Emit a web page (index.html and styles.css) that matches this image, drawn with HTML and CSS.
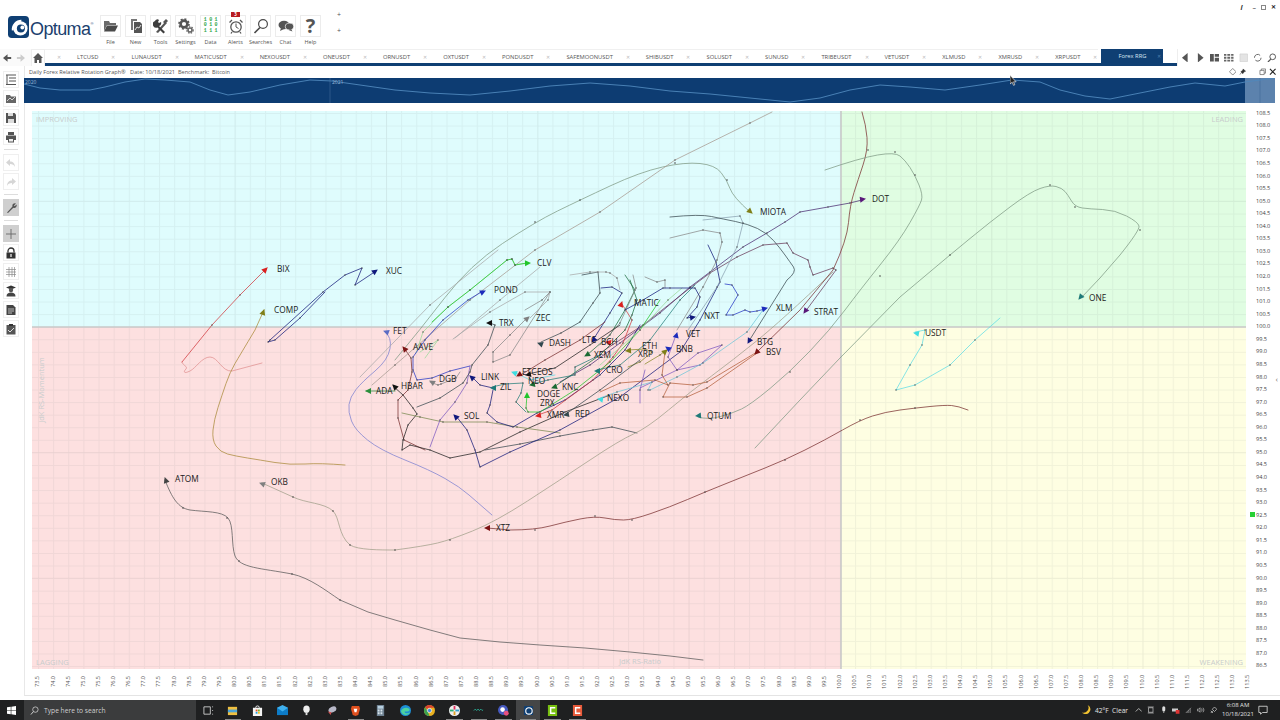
FILE: index.html
```html
<!DOCTYPE html>
<html lang="en">
<head>
<meta charset="utf-8">
<title>Optuma</title>
<link rel="stylesheet" href="styles.css">
</head>
<body>
<div class="app">
  <header class="topbar">
    <div class="logo">
      <svg class="logo-mark" viewBox="0 0 22 23"><rect x="0" y="0" width="22" height="23" rx="4" fill="#0f3f73"/><circle cx="13" cy="13" r="7.5" fill="#fff"/><path d="M5 15a9 9 0 0 1 9-10" fill="none" stroke="#fff" stroke-width="2"/><circle cx="13.5" cy="13" r="4.2" fill="#0f3f73"/><circle cx="15" cy="12" r="2" fill="#fff"/></svg>
      <span class="logo-text">Optuma</span>
    </div>
    <nav class="tools">
      <div class="tool"><span class="tool-box"><svg viewBox="0 0 16 16"><path d="M1 3h5l1 2h6v2H4L1 13z" fill="#6a6a6a"/><path d="M4 7.500h11l-3 6H1z" fill="#4a4a4a"/></svg></span><span class="tool-label">File</span></div>
      <div class="tool"><span class="tool-box"><svg viewBox="0 0 16 16"><path d="M3 1h6v2H5v9H3z" fill="#777"/><path d="M6 4h6l2 2v9H6z" fill="#555"/><path d="M7 12l2-3 2 1 2-3" fill="none" stroke="#fff" stroke-width=".8"/></svg></span><span class="tool-label">New</span></div>
      <div class="tool"><span class="tool-box"><svg viewBox="0 0 16 16"><path d="M3 14L12 4l2 1-9 10z" fill="#555"/><path d="M13 1l2 2-3 3-2-2z" fill="#555"/><path d="M2 3a2.500 2.500 0 0 1 4-1L5 4l1 1 2-1a3 3 0 0 1-2 4l6 6-1.500 1.500-6-6A3 3 0 0 1 2 3z" fill="#3e3e3e"/></svg></span><span class="tool-label">Tools</span></div>
      <div class="tool"><span class="tool-box"><svg viewBox="0 0 16 16"><circle cx="6" cy="6" r="3.400" fill="none" stroke="#555" stroke-width="2.600"/><circle cx="6" cy="6" r="5" fill="none" stroke="#555" stroke-width="1.600" stroke-dasharray="2 1.900"/><circle cx="12" cy="12" r="2" fill="none" stroke="#666" stroke-width="1.600"/><circle cx="12" cy="12" r="3.200" fill="none" stroke="#666" stroke-width="1.200" stroke-dasharray="1.500 1.200"/></svg></span><span class="tool-label">Settings</span></div>
      <div class="tool"><span class="tool-box"><span class="bits">1 0 1<br>0 1 0<br>1 1 1</span></span><span class="tool-label">Data</span></div>
      <div class="tool"><span class="tool-box"><svg viewBox="0 0 16 16"><circle cx="8" cy="9" r="5.200" fill="#fff" stroke="#555" stroke-width="1.300"/><path d="M8 5.500V9l2.500 1.500" fill="none" stroke="#555"/><path d="M1.500 4.500L4 2M14.500 4.500L12 2M4 14l-1 1.500M12 14l1 1.500" stroke="#555" stroke-width="1.300"/></svg></span><span class="tool-label">Alerts</span><span class="badge">3</span></div>
      <div class="tool"><span class="tool-box"><svg viewBox="0 0 16 16"><circle cx="10" cy="6" r="4.400" fill="none" stroke="#4a4a4a" stroke-width="1.200"/><path d="M7 9.500L1.500 15" stroke="#4a4a4a" stroke-width="1.600"/></svg></span><span class="tool-label">Searches</span></div>
      <div class="tool"><span class="tool-box"><svg viewBox="0 0 16 16"><ellipse cx="6" cy="7" rx="5.500" ry="4.200" fill="#555"/><path d="M3 10l-1 3 4-2z" fill="#555"/><ellipse cx="11.500" cy="8.500" rx="4.200" ry="3.400" fill="#555" stroke="#fff" stroke-width=".7"/><path d="M13 11l1.500 2.500-4-1.500z" fill="#555"/></svg></span><span class="tool-label">Chat</span></div>
      <div class="tool"><span class="tool-box help-mark">?</span><span class="tool-label">Help</span></div>
      <div class="plus-stack"><span>+</span><span>+</span></div>
    </nav>
    <div class="winctl"><span class="win-i">i</span><span>–</span><span class="win-sq"></span><span class="win-x">✕</span></div>
  </header>

  <div class="tabrow">
    <div class="tabnav">
      <svg class="nav-arrow" viewBox="0 0 10 10"><path d="M9 4H5V1L0 5l5 4V6h4z" fill="#555"/></svg>
      <svg class="nav-arrow" viewBox="0 0 10 10"><path d="M1 4h4V1l5 4-5 4V6H1z" fill="#ccc"/></svg>
      <span class="homebox"><svg class="home" viewBox="0 0 10 10"><path d="M5 0L0 5h1.500v5h2.500V7h2v3h2.500V5H10z" fill="#555"/></svg></span>
    </div>
    <div class="tabs">
      <span class="tab stub"><span class="tab-x">✕</span></span>
      <span class="tab">LTCUSD<span class="tab-x">✕</span></span>
      <span class="tab">LUNAUSDT<span class="tab-x">✕</span></span>
      <span class="tab">MATICUSDT<span class="tab-x">✕</span></span>
      <span class="tab">NEXOUSDT<span class="tab-x">✕</span></span>
      <span class="tab">ONEUSDT<span class="tab-x">✕</span></span>
      <span class="tab">ORNUSDT<span class="tab-x">✕</span></span>
      <span class="tab">OXTUSDT<span class="tab-x">✕</span></span>
      <span class="tab">PONDUSDT<span class="tab-x">✕</span></span>
      <span class="tab">SAFEMOONUSDT<span class="tab-x">✕</span></span>
      <span class="tab">SHIBUSDT<span class="tab-x">✕</span></span>
      <span class="tab">SOLUSDT<span class="tab-x">✕</span></span>
      <span class="tab">SUNUSD<span class="tab-x">✕</span></span>
      <span class="tab">TRIBEUSDT<span class="tab-x">✕</span></span>
      <span class="tab">VETUSDT<span class="tab-x">✕</span></span>
      <span class="tab">XLMUSD<span class="tab-x">✕</span></span>
      <span class="tab">XMRUSD<span class="tab-x">✕</span></span>
      <span class="tab">XRPUSDT<span class="tab-x">✕</span></span>
      <span class="tab active">Forex RRG<span class="tab-x">✕</span></span>
    </div>
    <div class="tabctl">
      <svg viewBox="0 0 10 10"><path d="M7 0v10L1 5z" fill="#555"/></svg>
      <svg viewBox="0 0 10 10"><path d="M3 0v10l6-5z" fill="#555"/></svg>
      <svg viewBox="0 0 10 10"><path d="M0 1h4v8H0zM5 1h5v3H5zM5 5h5v4H5z" fill="#555"/></svg>
      <svg viewBox="0 0 10 10"><path d="M0 1h2.500v2H0zM3.500 1h3v2h-3zM7.500 1H10v2H7.500zM0 4h2.500v2H0zM3.500 4h3v2h-3zM7.500 4H10v2H7.500zM0 7h2.500v2H0zM3.500 7h3v2h-3zM7.500 7H10v2H7.500z" fill="#666"/></svg>
      <svg viewBox="0 0 10 10"><path d="M1 1h8v8H1z" fill="#e4e4e4" stroke="#ccc" stroke-width=".6"/></svg>
      <svg viewBox="0 0 10 10"><path d="M1.500 5a3.500 3.500 0 0 1 6-2.500M8.500 5a3.500 3.500 0 0 1-6 2.500" fill="none" stroke="#666"/></svg>
      <svg viewBox="0 0 10 10"><circle cx="6" cy="4" r="3" fill="none" stroke="#555"/><path d="M4 6.500L1 9.500" stroke="#555" stroke-width="1.300"/></svg>
    </div>
  </div>

  <div class="main">
    <aside class="sidebar">
      <span class="side"><svg viewBox="0 0 12 12"><path d="M1 1h10M4 4h7M4 7h7M1 10.500h10M2 1v9.500" fill="none" stroke="#555"/></svg></span>
      <span class="side"><svg viewBox="0 0 12 12"><path d="M1 2h4l1 1.500h5V10H1z" fill="#666"/><path d="M2 8l3-3 2 2 3-3" fill="none" stroke="#eee" stroke-width=".8"/></svg></span>
      <span class="side"><svg viewBox="0 0 12 12"><path d="M1 1h8.500L11 2.500V11H1z" fill="#555"/><path d="M3 1h5v3H3zM3 7h6v4H3z" fill="#ddd"/></svg></span>
      <span class="side"><svg viewBox="0 0 12 12"><path d="M3 1h6v3H3zM1 4.500h10V9H9v2.500H3V9H1z" fill="#555"/><path d="M4 8h4v2.500H4z" fill="#eee"/></svg></span>
      <span class="side-sep"></span>
      <span class="side"><svg viewBox="0 0 12 12"><path d="M5 2L1 5.500 5 9V7c2.500 0 4 .8 5 3 0-3.500-2-5.500-5-5.500z" fill="#d6d6d6"/></svg></span>
      <span class="side"><svg viewBox="0 0 12 12"><path d="M7 2l4 3.500L7 9V7c-2.500 0-4 .8-5 3 0-3.500 2-5.500 5-5.500z" fill="#d6d6d6"/></svg></span>
      <span class="side-sep"></span>
      <span class="side on"><svg viewBox="0 0 12 12"><path d="M2 10.500L7.500 4.500a2.500 2.500 0 0 1 3.500-3L9 3.500l.7.8 1.800-1.800a2.500 2.500 0 0 1-3.200 3.300L3 11z" fill="#555"/></svg></span>
      <span class="side-sep"></span>
      <span class="side on"><svg viewBox="0 0 12 12"><path d="M6 1v10M1 6h10" stroke="#666" stroke-width=".9"/></svg></span>
      <span class="side"><svg viewBox="0 0 12 12"><path d="M3 5.500V4a3 3 0 0 1 6 0v1.500" fill="none" stroke="#333" stroke-width="1.300"/><rect x="1.500" y="5.500" width="9" height="6" fill="#333"/><rect x="5.300" y="7" width="1.400" height="3" fill="#ddd"/></svg></span>
      <span class="side"><svg viewBox="0 0 12 12"><path d="M4 1v10M7 1v10M9.500 1v10M1 3.500h10M1 6h10M1 8.500h10" stroke="#888" stroke-width=".7"/></svg></span>
      <span class="side"><svg viewBox="0 0 12 12"><path d="M6 .5l5 2-5 2-5-2z" fill="#333"/><circle cx="6" cy="5" r="2.200" fill="#555"/><path d="M1.500 11.500c0-3 2-4 4.500-4s4.500 1 4.500 4z" fill="#444"/></svg></span>
      <span class="side"><svg viewBox="0 0 12 12"><path d="M1.500 1H8l2.500 2.500V11h-9z" fill="#444"/><path d="M3 5h6M3 7h6M3 9h4" stroke="#eee" stroke-width=".7"/></svg></span>
      <span class="side"><svg viewBox="0 0 12 12"><path d="M1.500 2h9v9.500h-9z" fill="#555"/><rect x="4" y="1" width="4" height="2" fill="#333"/><path d="M3 7l2 2 4-4" fill="none" stroke="#ddd"/></svg></span>
    </aside>

    <section class="workspace">
      <div class="chart-title">
        <span class="chart-title-text">Daily Forex Relative Rotation Graph®&nbsp;&nbsp;&nbsp;Date: 10/18/2021&nbsp;&nbsp;Benchmark:&nbsp;&nbsp;Bitcoin</span>
        <span class="chart-ctl">
          <svg viewBox="0 0 8 8"><path d="M4 .5L7.500 4 4 7.500.5 4z" fill="none" stroke="#555" stroke-width=".7"/></svg>
          <svg viewBox="0 0 8 8"><path d="M4.500 1L7 3.500 5.500 4 4 6 2 4l2-1.500zM2.500 5L1 7" fill="#333" stroke="#333" stroke-width=".6"/></svg>
          <svg viewBox="0 0 8 8"></svg>
          <svg viewBox="0 0 8 8"><path d="M1 2.500h4.500V7H1zM2.500 2.500V1H7v4.500H5.500" fill="none" stroke="#555" stroke-width=".7"/></svg>
          <svg viewBox="0 0 8 8"><path d="M1 1l6 6M7 1L1 7" stroke="#222" stroke-width="1.200"/></svg>
        </span>
      </div>
      <div class="timeline">
        <svg class="timeline-svg" viewBox="24 78 1251 25" preserveAspectRatio="none">
          <rect class="tl-bg" x="24" y="78" width="1221" height="25"/>
          <rect class="tl-win" x="1245" y="78" width="30" height="25"/>
          <path class="tl-tick" d="M330 78v25M1260 78v25"/>
          <polyline class="tl-line" points="24,84 40,88 60,90 90,90 105,87 125,82 145,79 165,80 190,82 210,90 228,95 250,92 280,85 310,80 332,81 360,85 395,90 430,93 470,95 510,91 550,86 590,83 630,86 670,91 710,94 750,98 790,102 820,98 850,90 880,85 910,87 945,90 980,85 1012,80 1040,82 1060,90 1085,96 1110,99 1140,93 1170,87 1195,83 1225,86 1245,82 1275,78"/>
          <text class="tl-text" x="25" y="84">2020</text>
          <text class="tl-text" x="332" y="84">2021</text>
        </svg>
      </div>

      <div class="chart-row">
        <svg class="chart" viewBox="32 111 1214 558" role="img" aria-label="Relative rotation graph">
          <defs>
            <pattern id="grid" x="38" y="113" width="15.13" height="12.57" patternUnits="userSpaceOnUse">
              <path class="grid-line" d="M.5 0V12.570M0 .5H15.130"/>
            </pattern>
            <marker id="dot" markerWidth="3" markerHeight="3" refX="1.500" refY="1.500" markerUnits="userSpaceOnUse"><circle class="node" cx="1.500" cy="1.500" r=".65"/></marker>
            <path id="h" d="M1 0L-5 -3 -5 3Z"/>
          </defs>
          <rect class="q-improving" x="32" y="111" width="809" height="216"/>
          <rect class="q-leading" x="841" y="111" width="405" height="216"/>
          <rect class="q-lagging" x="32" y="327" width="809" height="342"/>
          <rect class="q-weakening" x="841" y="327" width="405" height="342"/>
          <rect class="grid-fill" x="32" y="111" width="1214" height="558"/>
          <path class="grid-major" d="M235 111V669M386.500 111V669M538 111V669M689 111V669M992 111V669M1143 111V669M32 201H1246M32 452.500H1246M32 578H1246"/>
          <path class="axis-cross" d="M841 111V669M32 327H1246"/>

          <text class="q-text" x="36" y="122">IMPROVING</text>
          <text class="q-text q-end" x="1243" y="122">LEADING</text>
          <text class="q-text" x="36" y="665">LAGGING</text>
          <text class="q-text q-end" x="1243" y="665">WEAKENING</text>
          <text class="q-text q-mid" x="640" y="664">JdK RS-Ratio</text>
          <text class="q-text q-mid" transform="translate(44 390) rotate(-90)">JdK RS-Momentum</text>

          <g class="trails">
            <path class="t lt-red sm" d="M182 362C183 366 188 366 186 369C183 372 184 374 190 371C196 368 202 357 210 357C218 357 222 372 232 371L262 363"/>
            <polyline class="t red" points="182,362 212,325 240,295 267,268"/>
            <path class="t orange sm" d="M264 310L255 330Q240 355 235 363.500Q230 372 226 383.500Q222 395 218 407.500Q214 420 213 430Q212 440 216 446Q220 452 227.500 454Q235 456 247.500 458Q260 460 275 462.500Q290 465 305 464Q320 463 345 465"/>
            <polyline class="t navy" points="376,271 355,285 362,268 345,275 323,292 270,340 268,342 275,340 300,318 325,292"/>
            <path class="t slate sm" d="M385 332Q392 337 390 348.500Q388 360 375 371Q362 382 356 389.500Q350 397 349 404.500Q348 412 351.500 421Q355 430 367.500 440Q380 450 405 460Q430 470 445 478.500Q460 487 469 495L492 515"/>
            <polyline class="t dred" points="404,348 411,358 412,372 408,390 398,400 398,418 404,440 425,450"/>
            <polyline class="t green" points="366,391 395,391"/>
            <polyline class="t black" points="393,386 403,395 413,408 417,414 408,425 403,440 402,450 410,445 430,450 450,458 480,452 520,432 565,412 610,395"/>
            <polyline class="t gray" points="430,382 438,385 441,384 456,378 460,372"/>
            <polyline class="t olive-gray" points="402,413 420,417 443,422 487,422 517,427 560,433"/>
            <polyline class="t dark" points="485,450 520,444 560,436 593,430 612,427 637,433"/>

            <path class="t ash sm" d="M165 480C172 498 178 508 190 510C205 512 222 511 228 518C234 525 231 545 235 556C240 568 260 568 292 574C310 578 325 590 340 600L368 612 395 620 430 630 460 638 500 642 540 645 585 648 630 652 670 656 703 660"/>
            <path class="t tan sm" d="M262 483L293 497C305 503 325 503 333 511C340 518 338 535 350 545C358 550 380 550 395 550Q425 546 437.500 543Q450 540 472.500 531Q495 522 527.500 501Q560 480 590 460Q620 440 633.500 434Q647 428 668.500 410Q690 392 711.500 376Q733 360 756.500 341Q780 322 833 272"/>
            <path class="t dred sm" d="M487 528L510 530Q535 530 550 526Q565 522 580 519Q595 516 605 518Q615 520 623.500 520Q632 520 651 513.500Q670 507 687.500 499.500Q705 492 725 484Q745 476 765 468Q785 460 805 450Q825 440 842.500 430Q860 420 872.500 416Q885 412 900 410Q915 408 930 406.500Q945 405 951.500 405.500Q958 406 968 410"/>
            <polyline class="t cyan-lt" points="915,332 925,330 922,345 910,365 896,390 915,385 950,365 975,340 1000,318"/>
            <path class="t sage sm" d="M1081 298L1100 278 1120 255Q1140 230 1139 226Q1138 222 1126.500 216Q1115 210 1102.500 209.500Q1090 209 1082.500 208Q1075 207 1071.500 201Q1068 195 1065 191.500Q1062 188 1056 186.500Q1050 185 1040 188.500Q1030 192 1010 207Q990 222 970 238.500L950 255 900 297 840 358 800 400 755 448"/>
            <polyline class="t purple" points="862,200 850,203 828,207 800,212 785,222 767,233 743,247 710,272 690,287 660,313 620,343 590,365 560,382"/>
            <polyline class="t plum" points="805,312 836,270 833,268 813,275 810,267 808,260 793,253 787,243 763,245 737,257 710,273 690,288 643,325 600,353"/>
            <path class="t dred sm" d="M757 352L800 310 833 270Q847 240 848.500 222.500Q850 205 854 192.500Q858 180 863 165Q868 150 867 137.500Q866 125 862 112"/>
            <path class="t sage sm" d="M750 212Q733 197 730 188.500Q727 180 721 172.500Q715 165 700 163.500Q685 162 662.500 167Q640 172 610 186Q580 200 557.500 211Q535 222 502.500 243.500Q470 265 445 297.500Q420 330 395 360"/>
            <polyline class="t lt-tan" points="772,112 750,123 675,160 600,212 535,250 470,300 395,365 372,385"/>
            <path class="t sage sm" d="M698 417Q708 420 720.500 416.500Q733 413 741.500 409Q750 405 770 388.500Q790 372 810 351Q830 330 845 310Q860 290 880 265Q900 240 910 222.500Q920 205 921.500 200Q923 195 919 185Q915 175 910 167.500Q905 160 900 156Q895 152 877.500 155Q860 158 825 170"/>
            <polyline class="t lt-green" points="527,263 515,265 512,259 507,260 470,290 448,307 423,332 416,353"/>
            <polyline class="t green-2" points="527,263 515,265 512,259 507,260 470,290 448,307 432,322"/>
            <polyline class="t lt-green" points="425,358 438,340 420,352"/>
            <polyline class="t blue" points="483,291 468,300 443,320 425,340 413,357 413,370 417,380 432,378 450,371 470,366"/>
            <polyline class="t violet" points="470,366 467,383 455,402 440,420 430,447"/>
            <polyline class="t navy" points="472,377 480,385 493,388"/>
            <polyline class="t navy" points="493,390 490,405 487,413 497,422 513,427 537,413 565,400 600,375 625,350 640,325"/>
            <polyline class="t teal" points="492,387 505,384 523,383 521,393 516,402 526,412"/>
            <polyline class="t navy" points="456,416 467,430 475,450 480,467 510,452 560,430 620,397 680,352 700,320 720,282 716,262 708,245"/>
            <polyline class="t dark" points="490,323 495,325 488,345 472,365 470,372 463,383 440,398 417,407"/>
            <polyline class="t gray" points="527,318 510,335 493,352 493,362 510,355 550,292 542,300 525,310"/>
            <polyline class="t lt-gray" points="453,339 490,312 525,292 550,292 548,300 530,318"/>
            <polyline class="t lt-gray" points="498,250 430,305 360,377"/>
            <polyline class="t lt-gray" points="540,267 500,300 455,338"/>
            <polyline class="t dark" points="541,342 561,333 580,322 593,303 600,293 598,272 582,275"/>
            <polyline class="t navy" points="593,340 610,313 622,293 612,287 601,288"/>
            <polyline class="t red" points="538,415 552,410 593,380 613,357 623,343 632,320 622,304"/>
            <polyline class="t green-2" points="527,395 526,408 528,412 540,412 575,390 610,362 640,330 660,300"/>
            <polyline class="t teal" points="597,370 620,365 650,340 680,300 695,285"/>
            <polyline class="t dgreen" points="554,387 600,355 625,330 632,315 637,300 630,280"/>
            <polyline class="t dgreen" points="587,355 610,335 625,310 635,290 625,275"/>
            <polyline class="t lt-green" points="600,365 640,330 668,300 682,288"/>
            <polyline class="t lt-gray" points="570,275 590,272 606,272 610,273 617,278 620,290"/>
            <polyline class="t gray" points="633,275 636,288 620,323 600,345"/>
            <polyline class="t gray" points="645,277 657,282 665,280 665,288"/>
            <polyline class="t gray" points="670,238 703,230 720,233 722,242 717,260 703,287 677,330"/>
            <polyline class="t steel" points="703,220 740,216 743,223 737,247 717,287 688,330"/>
            <path class="t dark sm" d="M749 341L787 280Q797 272 793.500 267Q790 262 785 255Q780 248 773.500 240.500Q767 233 757.500 228.500Q748 224 735.500 221.500Q723 219 711.500 216.500Q700 214 670 217"/>
            <polyline class="t blue" points="765,309 757,311 750,312 745,310 733,315 726,315 738,295 732,285 725,284"/>
            <polyline class="t navy" points="692,317 687,318 697,307 700,297 695,288 670,288 663,288 643,300 625,310"/>
            <polyline class="t violet" points="676,335 668,357 677,370 700,365 722,345 698,353 677,370 640,388"/>
            <polyline class="t sky" points="763,310 747,332 703,363 677,377 650,390 648,390 652,382 617,392 600,398"/>
            <polyline class="t brick" points="757,352 707,382 693,385 670,383 663,397 687,397 707,388 757,353"/>
            <polyline class="t brick" points="665,352 662,375 668,385 655,380 620,383 600,392"/>
            <polyline class="t olive" points="628,350 645,349 652,352 640,362 628,367"/>
            <polyline class="t olive" points="665,351 660,355 645,364"/>
            <polyline class="t violet" points="645,370 640,390 640,403"/>
            <polyline class="t dred" points="519,376 545,360 580,340 605,322"/>
            <polyline class="t black" points="528,374 555,368 590,345 620,325"/>
            <polyline class="t teal" points="532,384 548,380 575,375 575,367 600,355"/>
            <polyline class="t dark" points="566,414 600,390 640,360"/>
            <polyline class="t cyan-lt" points="514,372 530,380 555,375"/>
          </g>

          <g class="dots">
            <circle class="dotmark" cx="183" cy="508" r=".8"/><circle class="dotmark" cx="227" cy="518" r=".8"/><circle class="dotmark" cx="239" cy="561" r=".8"/><circle class="dotmark" cx="292" cy="574" r=".8"/><circle class="dotmark" cx="340" cy="600" r=".8"/>
            <circle class="dotmark" cx="293" cy="497" r=".8"/><circle class="dotmark" cx="333" cy="511" r=".8"/><circle class="dotmark" cx="350" cy="545" r=".8"/><circle class="dotmark" cx="395" cy="550" r=".8"/><circle class="dotmark" cx="450" cy="540" r=".8"/>
            <circle class="dotmark" cx="535" cy="530" r=".8"/><circle class="dotmark" cx="595" cy="516" r=".8"/><circle class="dotmark" cx="632" cy="520" r=".8"/><circle class="dotmark" cx="705" cy="492" r=".8"/><circle class="dotmark" cx="785" cy="460" r=".8"/><circle class="dotmark" cx="860" cy="420" r=".8"/><circle class="dotmark" cx="915" cy="408" r=".8"/>
            <circle class="dotmark" cx="1140" cy="230" r=".8"/><circle class="dotmark" cx="1075" cy="207" r=".8"/><circle class="dotmark" cx="1050" cy="185" r=".8"/><circle class="dotmark" cx="950" cy="255" r=".8"/><circle class="dotmark" cx="880" cy="276" r=".8"/>
            <circle class="dotmark" cx="727" cy="180" r=".8"/><circle class="dotmark" cx="675" cy="163" r=".8"/><circle class="dotmark" cx="580" cy="200" r=".8"/><circle class="dotmark" cx="535" cy="222" r=".8"/>
            <circle class="dotmark" cx="790" cy="372" r=".8"/><circle class="dotmark" cx="868" cy="150" r=".8"/><circle class="dotmark" cx="895" cy="152" r=".8"/><circle class="dotmark" cx="915" cy="175" r=".8"/>
          </g>

          <g class="heads">
            <use href="#h" class="h red" transform="translate(267 268) rotate(-45)"/>
            <use href="#h" class="h olive" transform="translate(264 310) rotate(-70)"/>
            <use href="#h" class="h navy" transform="translate(377 270) rotate(-35)"/>
            <use href="#h" class="h slate" transform="translate(384 331) rotate(200)"/>
            <use href="#h" class="h dred" transform="translate(403 347) rotate(230)"/>
            <use href="#h" class="h green" transform="translate(366 391) rotate(180)"/>
            <use href="#h" class="h black" transform="translate(393 385) rotate(225)"/>
            <use href="#h" class="h gray" transform="translate(430 381) rotate(210)"/>
            <use href="#h" class="h ash" transform="translate(165 478) rotate(250)"/>
            <use href="#h" class="h gray" transform="translate(260 483) rotate(200)"/>
            <use href="#h" class="h dred" transform="translate(485 528) rotate(180)"/>
            <use href="#h" class="h cyan-lt" transform="translate(914 333) rotate(190)"/>
            <use href="#h" class="h teal" transform="translate(1079 299) rotate(130)"/>
            <use href="#h" class="h purple" transform="translate(865 199) rotate(-8)"/>
            <use href="#h" class="h purple" transform="translate(804 313) rotate(125)"/>
            <use href="#h" class="h olive" transform="translate(752 213) rotate(40)"/>
            <use href="#h" class="h teal" transform="translate(696 416) rotate(175)"/>
            <use href="#h" class="h green-2" transform="translate(530 263) rotate(-2)"/>
            <use href="#h" class="h blue" transform="translate(485 291) rotate(-25)"/>
            <use href="#h" class="h black" transform="translate(487 323) rotate(180)"/>
            <use href="#h" class="h gray" transform="translate(529 317) rotate(-40)"/>
            <use href="#h" class="h dark" transform="translate(538 343) rotate(200)"/>
            <use href="#h" class="h navy" transform="translate(592 342) rotate(130)"/>
            <use href="#h" class="h red" transform="translate(622 302) rotate(-70)"/>
            <use href="#h" class="h red" transform="translate(606 342) rotate(190)"/>
            <use href="#h" class="h dgreen" transform="translate(585 356) rotate(150)"/>
            <use href="#h" class="h dred" transform="translate(517 376) rotate(150)"/>
            <use href="#h" class="h black" transform="translate(526 375) rotate(170)"/>
            <use href="#h" class="h dgreen" transform="translate(530 385) rotate(170)"/>
            <use href="#h" class="h cyan-lt" transform="translate(512 372) rotate(200)"/>
            <use href="#h" class="h teal" transform="translate(595 371) rotate(180)"/>
            <use href="#h" class="h dgreen" transform="translate(552 388) rotate(160)"/>
            <use href="#h" class="h green-2" transform="translate(527 393) rotate(-90)"/>
            <use href="#h" class="h cyan-lt" transform="translate(598 399) rotate(190)"/>
            <use href="#h" class="h red" transform="translate(536 416) rotate(170)"/>
            <use href="#h" class="h dark" transform="translate(564 415) rotate(170)"/>
            <use href="#h" class="h navy" transform="translate(470 376) rotate(220)"/>
            <use href="#h" class="h teal" transform="translate(491 388) rotate(180)"/>
            <use href="#h" class="h navy" transform="translate(454 415) rotate(225)"/>
            <use href="#h" class="h olive" transform="translate(626 351) rotate(175)"/>
            <use href="#h" class="h olive" transform="translate(667 350) rotate(-40)"/>
            <use href="#h" class="h blue" transform="translate(666 347) rotate(215)"/>
            <use href="#h" class="h blue" transform="translate(677 333) rotate(-75)"/>
            <use href="#h" class="h navy" transform="translate(695 317) rotate(-10)"/>
            <use href="#h" class="h blue" transform="translate(767 308) rotate(-15)"/>
            <use href="#h" class="h navy" transform="translate(748 343) rotate(120)"/>
            <use href="#h" class="h dred" transform="translate(755 354) rotate(135)"/>
          </g>

          <g class="labels">
            <text x="277" y="272">BIX</text><text x="274" y="313">COMP</text><text x="386" y="274">XUC</text>
            <text x="393" y="334">FET</text><text x="413" y="350">AAVE</text><text x="376" y="394">ADA</text>
            <text x="401" y="389">HBAR</text><text x="439" y="382">DGB</text><text x="175" y="482">ATOM</text>
            <text x="271" y="485">OKB</text><text x="496" y="531">XTZ</text><text x="925" y="336">USDT</text>
            <text x="1089" y="301">ONE</text><text x="872" y="202">DOT</text><text x="814" y="315">STRAT</text>
            <text x="760" y="215">MIOTA</text><text x="707" y="419">QTUM</text><text x="537" y="266">CLV</text>
            <text x="494" y="293">POND</text><text x="499" y="326">TRX</text><text x="536" y="321">ZEC</text>
            <text x="549" y="346">DASH</text><text x="582" y="343">LTC</text><text x="601" y="345">BCH</text>
            <text x="634" y="306">MATIC</text><text x="594" y="358">XEM</text><text x="522" y="375">ETC</text>
            <text x="537" y="375">EOS</text><text x="528" y="384">NEO</text><text x="606" y="373">CRO</text>
            <text x="562" y="390">KNC</text><text x="537" y="397">DOGE</text><text x="540" y="406">ZRX</text>
            <text x="607" y="401">NEXO</text><text x="547" y="418">XMR</text><text x="575" y="417">REP</text>
            <text x="481" y="380">LINK</text><text x="500" y="390">ZIL</text><text x="464" y="419">SOL</text>
            <text x="642" y="349">ETH</text><text x="638" y="357">XRP</text><text x="676" y="352">BNB</text>
            <text x="686" y="337">VET</text><text x="704" y="319">NXT</text><text x="776" y="311">XLM</text>
            <text x="757" y="345">BTG</text><text x="766" y="355">BSV</text>
          </g>
        </svg>
        <div class="yaxis">
          <span>108.5</span><span>108.0</span><span>107.5</span><span>107.0</span><span>106.5</span><span>106.0</span><span>105.5</span><span>105.0</span><span>104.5</span><span>104.0</span><span>103.5</span><span>103.0</span><span>102.5</span><span>102.0</span><span>101.5</span><span>101.0</span><span>100.5</span><span>100.0</span><span>99.5</span><span>99.0</span><span>98.5</span><span>98.0</span><span>97.5</span><span>97.0</span><span>96.5</span><span>96.0</span><span>95.5</span><span>95.0</span><span>94.5</span><span>94.0</span><span>93.5</span><span>93.0</span><span class="y-current">92.5</span><span>92.0</span><span>91.5</span><span>91.0</span><span>90.5</span><span>90.0</span><span>89.5</span><span>89.0</span><span>88.5</span><span>88.0</span><span>87.5</span><span>87.0</span><span>86.5</span>
        </div>
        <span class="collapse">‹</span>
      </div>
      <div class="xaxis">
        <span>73.5</span><span>74.0</span><span>74.5</span><span>75.0</span><span>75.5</span><span>76.0</span><span>76.5</span><span>77.0</span><span>77.5</span><span>78.0</span><span>78.5</span><span>79.0</span><span>79.5</span><span>80.0</span><span>80.5</span><span>81.0</span><span>81.5</span><span>82.0</span><span>82.5</span><span>83.0</span><span>83.5</span><span>84.0</span><span>84.5</span><span>85.0</span><span>85.5</span><span>86.0</span><span>86.5</span><span>87.0</span><span>87.5</span><span>88.0</span><span>88.5</span><span>89.0</span><span>89.5</span><span>90.0</span><span>90.5</span><span>91.0</span><span>91.5</span><span>92.0</span><span>92.5</span><span>93.0</span><span>93.5</span><span>94.0</span><span>94.5</span><span>95.0</span><span>95.5</span><span>96.0</span><span>96.5</span><span>97.0</span><span>97.5</span><span>98.0</span><span>98.5</span><span>99.0</span><span>99.5</span><span>100.0</span><span>100.5</span><span>101.0</span><span>101.5</span><span>102.0</span><span>102.5</span><span>103.0</span><span>103.5</span><span>104.0</span><span>104.5</span><span>105.0</span><span>105.5</span><span>106.0</span><span>106.5</span><span>107.0</span><span>107.5</span><span>108.0</span><span>108.5</span><span>109.0</span><span>109.5</span><span>110.0</span><span>110.5</span><span>111.0</span><span>111.5</span><span>112.0</span><span>112.5</span><span>113.0</span><span>113.5</span>
      </div>
    </section>
    <svg class="cursor" viewBox="0 0 8 12"><path d="M0 0v10l2.500-2 1.500 3.500 1.500-.6L4 7.500h3z" fill="#222" stroke="#fff" stroke-width=".7"/></svg>
  </div>

  <footer class="taskbar">
    <svg class="start" viewBox="0 0 12 12"><path d="M0 1.800L5 1v4.500H0zM5.800.9L12 0v5.500H5.800zM0 6.300h5v4.600L0 10.200zM5.800 6.300H12V12l-6.200-.9z" fill="#fff"/></svg>
    <div class="search"><svg viewBox="0 0 10 10"><circle cx="6" cy="4" r="3" fill="none" stroke="#ddd" stroke-width=".8"/><path d="M3.800 6.200L1 9.500" stroke="#ddd"/></svg><span>Type here to search</span></div>
    <div class="task-icons">
      <span class="ti"><svg viewBox="0 0 12 12"><path d="M1 2h7v8H1zM10 2h1M10 6h1M10 10h1" fill="none" stroke="#ddd" stroke-width=".9"/></svg></span>
      <span class="ti open"><svg viewBox="0 0 12 12"><path d="M1 2h10v9H1z" fill="#f0c040"/><path d="M1 5h10v3H1z" fill="#4aa3d8"/></svg></span>
      <span class="ti"><svg viewBox="0 0 12 12"><path d="M1 3h10v9H1z" fill="#f4f4f4"/><path d="M4 3a2 2 0 0 1 4 0" fill="none" stroke="#f4f4f4"/><path d="M4 5h2v2H4z" fill="#e85020"/><path d="M6.500 5h2v2h-2z" fill="#70b030"/><path d="M4 7.500h2v2H4z" fill="#20a0e0"/><path d="M6.500 7.500h2v2h-2z" fill="#f0c020"/></svg></span>
      <span class="ti"><svg viewBox="0 0 12 12"><path d="M0 3h12v8H0z" fill="#0c7cc8"/><path d="M0 3l6 4 6-4-6-3z" fill="#3fb0ee"/></svg></span>
      <span class="ti"><svg viewBox="0 0 12 12"><ellipse cx="6" cy="4.500" rx="3.500" ry="4" fill="#eee"/><path d="M5 8h2v3H5z" fill="#ddd"/></svg></span>
      <span class="ti"><svg viewBox="0 0 12 12"><ellipse cx="7" cy="5" rx="4.500" ry="3" fill="#b8b8c8" transform="rotate(-25 7 5)"/><path d="M2 7l3 4 1-3z" fill="#d05050"/></svg></span>
      <span class="ti open"><svg viewBox="0 0 12 12"><path d="M2 1h8l1 3-2 7-3 1-3-1-2-7z" fill="#e0501f"/><path d="M4 4h4l-1 4H5z" fill="#fff"/></svg></span>
      <span class="ti"><svg viewBox="0 0 12 12"><path d="M2 0h8v12H2z" fill="#6d8090"/><path d="M3 1h6v3H3z" fill="#b8d0e0"/><path d="M3 5h2v2H3zM6 5h2v2H6zM3 8h2v2H3zM6 8h2v2H6z" fill="#d8e4ec"/></svg></span>
      <span class="ti"><svg viewBox="0 0 12 12"><circle cx="6" cy="6" r="6" fill="#1d8fd6"/><path d="M1 7c1-4 6-5 9-3 1 1 .5 3-2 3H5c0 2 3 3 6 1-1 3-7 5-10-1z" fill="#4ed3a0"/></svg></span>
      <span class="ti"><svg viewBox="0 0 12 12"><circle cx="6" cy="6" r="6" fill="#e8b020"/><path d="M6 0a6 6 0 0 1 5.200 3H6a3 3 0 0 0-2.600 1.500L1.200 2.500A6 6 0 0 1 6 0z" fill="#d94030"/><path d="M0 6a6 6 0 0 1 1.200-3.500l3 5L6 12A6 6 0 0 1 0 6z" fill="#3aa050"/><circle cx="6" cy="6" r="2.300" fill="#4a88e0" stroke="#fff" stroke-width=".7"/></svg></span>
      <span class="ti open"><svg viewBox="0 0 12 12"><circle cx="6" cy="6" r="6" fill="#eee"/><path d="M6 1v4" stroke="#e03060" stroke-width="2"/><path d="M6 7v4" stroke="#e0a020" stroke-width="2"/><path d="M1 6h4" stroke="#30b070" stroke-width="2"/><path d="M7 6h4" stroke="#30a0d0" stroke-width="2"/></svg></span>
      <span class="ti open"><svg viewBox="0 0 12 12"><path d="M1 6l1.500-1.500L4 6l1.500-1.500L7 6l1.500-1.500L10 6l1-.8" fill="none" stroke="#2db39a"/></svg></span>
      <span class="ti open"><svg viewBox="0 0 12 12"><circle cx="5.500" cy="5.500" r="5.500" fill="#4659c0"/><circle cx="5" cy="5" r="2.500" fill="#fff"/><circle cx="9" cy="9" r="2.700" fill="#e85080"/></svg></span>
      <span class="ti open active"><svg viewBox="0 0 12 12"><path d="M2 1h8a1 1 0 0 1 1 1v9H1V2z" fill="#0f3f73"/><circle cx="6.500" cy="6.500" r="3.500" fill="none" stroke="#fff" stroke-width="1.200"/></svg></span>
      <span class="ti open"><svg viewBox="0 0 12 12"><path d="M1 0h10v12H1z" fill="#78c010"/><path d="M9 3H4v6h5" fill="none" stroke="#fff" stroke-width="1.600"/></svg></span>
      <span class="ti open"><svg viewBox="0 0 12 12"><path d="M1 0h10v12H1z" fill="#e85a3a"/><path d="M9 3H4v6h5" fill="none" stroke="#fff" stroke-width="1.600"/></svg></span>
    </div>
    <div class="tray">
      <svg class="moon" viewBox="0 0 12 12"><path d="M8 0a6 6 0 0 1-7 9 6 6 0 0 0 10-2A6 6 0 0 0 8 0z" fill="#f2c230"/></svg>
      <span class="weather">42°F&nbsp;&nbsp;Clear</span>
      <span class="tray-icons">
        <svg viewBox="0 0 10 10"><path d="M1 7l4-4 4 4" fill="none" stroke="#ddd"/></svg>
        <svg viewBox="0 0 10 10"><path d="M2 2h6v6H2zM1 1h8M1 9h8" fill="none" stroke="#ddd" stroke-width=".8"/></svg>
        <svg viewBox="0 0 10 10"><rect x="3" y="0" width="4" height="7" rx="2" fill="#ddd"/><path d="M5 7v2" stroke="#ddd"/></svg>
        <svg viewBox="0 0 10 10"><path d="M0 3h8v4H0z" fill="#ccc"/><rect x="5" y="5" width="5" height="5" fill="#d33"/></svg>
        <svg viewBox="0 0 10 10"><path d="M1 9l7-7M3 9V7M5 9V5M7 9V3" stroke="#aaa" stroke-width=".8"/></svg>
        <svg viewBox="0 0 10 10"><path d="M0 4h2l2-2v6L2 6H0zM6 3a3 3 0 0 1 0 4M8 2a4.500 4.500 0 0 1 0 6" fill="none" stroke="#ddd" stroke-width=".8"/></svg>
        <svg viewBox="0 0 10 10"><path d="M1 9l3-3M3 4l3-3 3 3-3 3zM1 6l3 3" fill="none" stroke="#ddd" stroke-width=".9"/></svg>
      </span>
      <span class="clock">6:08 AM<br>10/18/2021</span>
      <svg class="notify" viewBox="0 0 12 12"><path d="M1 1.500h10v7.500H5.500L3 11V9H1z" fill="none" stroke="#eee" stroke-width=".9"/></svg>
    </div>
  </footer>
</div>
</body>
</html>
```
FILE: styles.css
```css
* { box-sizing: border-box; }
html, body { margin: 0; padding: 0; }
body { width: 1280px; height: 720px; overflow: hidden; background: #fff; font-family: "Open Sans", "Noto Sans", sans-serif; color: #444; }
svg { display: block; }
.app { width: 1280px; height: 720px; display: flex; flex-direction: column; }

/* top bar */
.topbar { height: 49px; flex: none; display: flex; align-items: flex-start; padding: 15px 0 0 8px; position: relative; background: #fff; }
.logo { width: 92px; display: flex; align-items: center; height: 23px; gap: 1px; }
.logo-mark { width: 21px; height: 22px; flex: none; }
.logo-text { font: 18px/23px "Liberation Sans", Arial, sans-serif; color: #1b3f6e; letter-spacing: -.6px; }
.logo-text::after { content: "®"; font-size: 4px; vertical-align: 10px; }
.tools { display: flex; gap: 4px; }
.tool { width: 21px; display: flex; flex-direction: column; align-items: center; position: relative; }
.tool-box { width: 21px; height: 22px; display: flex; align-items: center; justify-content: center; border: 1px solid #ececec; background: #fff; }
.tool-box svg { width: 16px; height: 16px; }
.tool-label { font-size: 5.5px; line-height: 8px; margin-top: 1px; white-space: nowrap; color: #555; }
.bits { font: 700 5px/5.600px "Liberation Mono", monospace; color: #2fa64a; text-align: center; letter-spacing: -.3px; }
.badge { position: absolute; top: -3px; left: 6px; width: 9px; height: 5px; background: #b81c22; color: #fff; font-size: 4.500px; line-height: 5px; text-align: center; font-weight: 700; }
.help-mark { font: 700 20px/22px "Open Sans", sans-serif; color: #555; }
.plus-stack { margin-left: 12px; margin-top: -5px; display: flex; flex-direction: column; gap: 6px; font-size: 7px; line-height: 10px; color: #555; }
.winctl { position: absolute; right: 4px; top: 3px; display: flex; gap: 5px; align-items: center; font-size: 7px; line-height: 9px; color: #333; height: 9px; }
.win-i { font-style: italic; font-weight: 700; margin-right: 5px; }
.win-sq { width: 5px; height: 5px; border: 1px solid #888; }
.win-x { font-weight: 700; color: #222; font-size: 6px; }

/* tabs */
.tabrow { height: 17px; flex: none; display: flex; position: relative; }
.tabnav { width: 45px; flex: none; display: flex; align-items: center; padding: 0 0 0 3px; gap: 4px; background: #fafafa; }
.nav-arrow { width: 10px; height: 10px; }
.homebox { width: 15px; height: 17px; margin-left: 2px; display: flex; align-items: center; justify-content: center; border: 1px solid #eee; border-bottom: 0; background: #fff; }
.home { width: 10px; height: 10px; }
.tabs { width: 1132px; flex: none; display: flex; height: 17px; align-items: flex-start; border-bottom: 3px solid #0f3f73; background: #fff; overflow: hidden; }
.tab { height: 14px; display: flex; align-items: center; padding-left: 15px; font-size: 5.800px; color: #555; white-space: nowrap; flex: none; border-top: 1px solid #f0f0f0; }
.tab.stub { padding-left: 8px; }
.tab-x { margin-left: 12px; font-size: 5px; color: #bbb; width: 6px; text-align: center; }
.tab.stub .tab-x { margin-left: 3px; }
.tab.active { background: #0f3f73; color: #d8e6f2; margin-left: 3px; padding-left: 17px; padding-right: 1px; border: 0; }
.tab.active .tab-x { color: #4f7fae; margin-left: 10px; }
.tabctl { flex: 1; display: flex; align-items: center; gap: 4.900px; padding-left: 3px; background: #fff; border-left: 1px solid #eee; }
.tabctl svg { width: 9.500px; height: 9.500px; flex: none; }

/* main */
.main { flex: 1; display: flex; min-height: 0; position: relative; }
.sidebar { width: 20px; flex: none; display: flex; flex-direction: column; align-items: center; gap: 2px; padding: 5px 0 0 2px; }
.side { width: 16px; height: 17px; display: flex; align-items: center; justify-content: center; border: 1px solid #efefef; flex: none; background: #fff; }
.side svg { width: 12px; height: 12px; }
.side.on { background: #cfcfcf; border-color: #cfcfcf; }
.side-sep { width: 14px; height: 1px; margin: 2px 0; background: #ddd; flex: none; }
.workspace { width: 1256px; flex: none; margin-left: 4px; height: 630px; border-left: 1px solid #e8e8e8; border-bottom: 1px solid #e4e4e4; display: flex; flex-direction: column; }
.chart-title { height: 12px; flex: none; display: flex; justify-content: space-between; align-items: center; padding: 0 3px 0 4px; font-size: 5.600px; color: #555; }
.chart-ctl { display: flex; gap: 2.500px; margin-right: 1px; }
.chart-ctl svg { width: 7.500px; height: 7.500px; }
.timeline { height: 25px; flex: none; margin-left: -1px; width: 1251px; }
.timeline-svg { width: 1251px; height: 25px; }
.tl-bg { fill: #0d3c72; }
.tl-win { fill: #5c82ad; }
.tl-tick { stroke: #3f6a99; stroke-width: .6; fill: none; }
.tl-line { fill: none; stroke: #4f88bc; stroke-width: .9; }
.tl-text { fill: #9dbbd8; font-size: 5px; }

.chart-row { margin-top: 8px; height: 558px; flex: none; display: flex; padding-left: 7px; position: relative; }
.chart { width: 1214px; height: 558px; flex: none; }
.q-improving { fill: #dffcfd; }
.q-leading { fill: #e0fde2; }
.q-lagging { fill: #fde0e0; }
.q-weakening { fill: #fefee2; }
.grid-fill { fill: url(#grid); }
.grid-line { stroke: #6d7a78; stroke-opacity: .09; stroke-width: 1; fill: none; }
.grid-major { stroke: #6d7a78; stroke-opacity: .05; stroke-width: 1; fill: none; }
.axis-cross { stroke: #c9c9c9; stroke-width: 1.600; fill: none; }
.q-text { font-size: 7.500px; fill: #c8cccc; }
.q-end { text-anchor: end; }
.q-mid { text-anchor: middle; }
.node { fill: #444; }
.dotmark { fill: #444; }
.labels text { font-size: 8.300px; fill: #1a1a1a; font-family: "Open Sans", "Noto Sans", sans-serif; }

.red { stroke: #d03a3e; fill: #d92020; }
.lt-red { stroke: #e09090; fill: #e88a8a; }
.dred { stroke: #7a3030; fill: #7d1414; }
.orange { stroke: #a98a3a; fill: #a98a3a; }
.brick { stroke: #b4603c; fill: #b4603c; }
.olive { stroke: #8a8a28; fill: #7f7f18; }
.olive-gray { stroke: #7a8a50; fill: #7a8a50; }
.tan { stroke: #a09f8a; fill: #9b9a7f; }
.lt-tan { stroke: #a79a90; fill: #a79a90; }
.navy { stroke: #141a7a; fill: #10187c; }
.blue { stroke: #2436c4; fill: #1c2cbc; }
.slate { stroke: #7c80d0; fill: #5a6cc4; }
.violet { stroke: #7d5ac0; fill: #7d5ac0; }
.steel { stroke: #8aa0b0; fill: #8aa0b0; }
.sky { stroke: #6ec5d8; fill: #6ec5d8; }
.green { stroke: #2b8a3c; fill: #2c8f3c; }
.green-2 { stroke: #22c52a; fill: #22c52a; }
.lt-green { stroke: #9ad89a; fill: #9ad89a; }
.dgreen { stroke: #1f6e40; fill: #1b6b34; }
.teal { stroke: #237d78; fill: #1f7a78; }
.cyan-lt { stroke: #5fdce4; fill: #3fdde0; }
.sage { stroke: #7f9a84; fill: #7f9a84; }
.purple { stroke: #4a2a70; fill: #5a1a7a; }
.plum { stroke: #6a3a5a; fill: #6a3a5a; }
.black { stroke: #222; fill: #111; }
.dark { stroke: #3a4a50; fill: #32484f; }
.ash { stroke: #5a5a5a; fill: #444; }
.gray { stroke: #8a8a8a; fill: #808080; }
.lt-gray { stroke: #a8a8a8; fill: #a8a8a8; }

.trails .t { fill: none; stroke-width: .75; marker-mid: url(#dot); stroke-linejoin: round; stroke-linecap: round; }
.trails .t.sm { marker-mid: none; }
use.h { stroke: none; }

.yaxis { width: 30px; flex: none; display: flex; flex-direction: column; margin-top: -4.300px; height: 566px; }
.yaxis span { height: 12.570px; flex: none; font-size: 5.600px; line-height: 12.570px; padding-left: 10px; color: #444; position: relative; }
.y-current::before { content: ""; position: absolute; left: 4px; top: 3.500px; width: 5px; height: 5px; background: #27d035; }
.collapse { position: absolute; right: 2px; top: 264px; font-size: 8px; line-height: 8px; color: #777; }
.xaxis { height: 27px; flex: none; display: flex; padding: 7px 0 0 5.400px; }
.xaxis span { width: 15.130px; flex: none; height: 13px; writing-mode: vertical-rl; transform: rotate(180deg); font-size: 5.600px; line-height: 15.130px; text-align: right; color: #555; }
.cursor { position: absolute; left: 1010px; top: 9px; width: 7px; height: 11px; }

/* taskbar */
.taskbar { height: 20px; flex: none; display: flex; align-items: center; background: #1f2021; color: #e4e4e4; }
.start { width: 9px; height: 9px; margin: 0 0 0 7px; flex: none; }
.search { width: 172px; height: 20px; margin-left: 8px; flex: none; display: flex; align-items: center; gap: 5px; padding-left: 6px; background: #3b3c3d; font-size: 6.700px; color: #cfcfcf; }
.search svg { width: 9px; height: 9px; flex: none; }
.task-icons { display: flex; }
.ti { width: 24.600px; height: 20px; display: flex; align-items: center; justify-content: center; position: relative; }
.ti svg { width: 11px; height: 11px; }
.ti.open::after { content: ""; position: absolute; left: 4px; right: 4px; bottom: 0; height: 1px; background: #8a8a8a; }
.ti.active { background: #454647; }
.tray { margin-left: auto; display: flex; align-items: center; height: 20px; padding-right: 12px; }
.moon { width: 10px; height: 10px; margin-right: 4px; }
.weather { font-size: 6.600px; margin-right: 6.500px; white-space: nowrap; }
.tray-icons { display: flex; gap: 5px; }
.tray-icons svg { width: 7.500px; height: 8px; }
.clock { width: 36px; margin-left: 3px; margin-right: 2px; font-size: 6px; line-height: 9px; text-align: center; white-space: nowrap; }
.notify { width: 10px; height: 10px; }
```
